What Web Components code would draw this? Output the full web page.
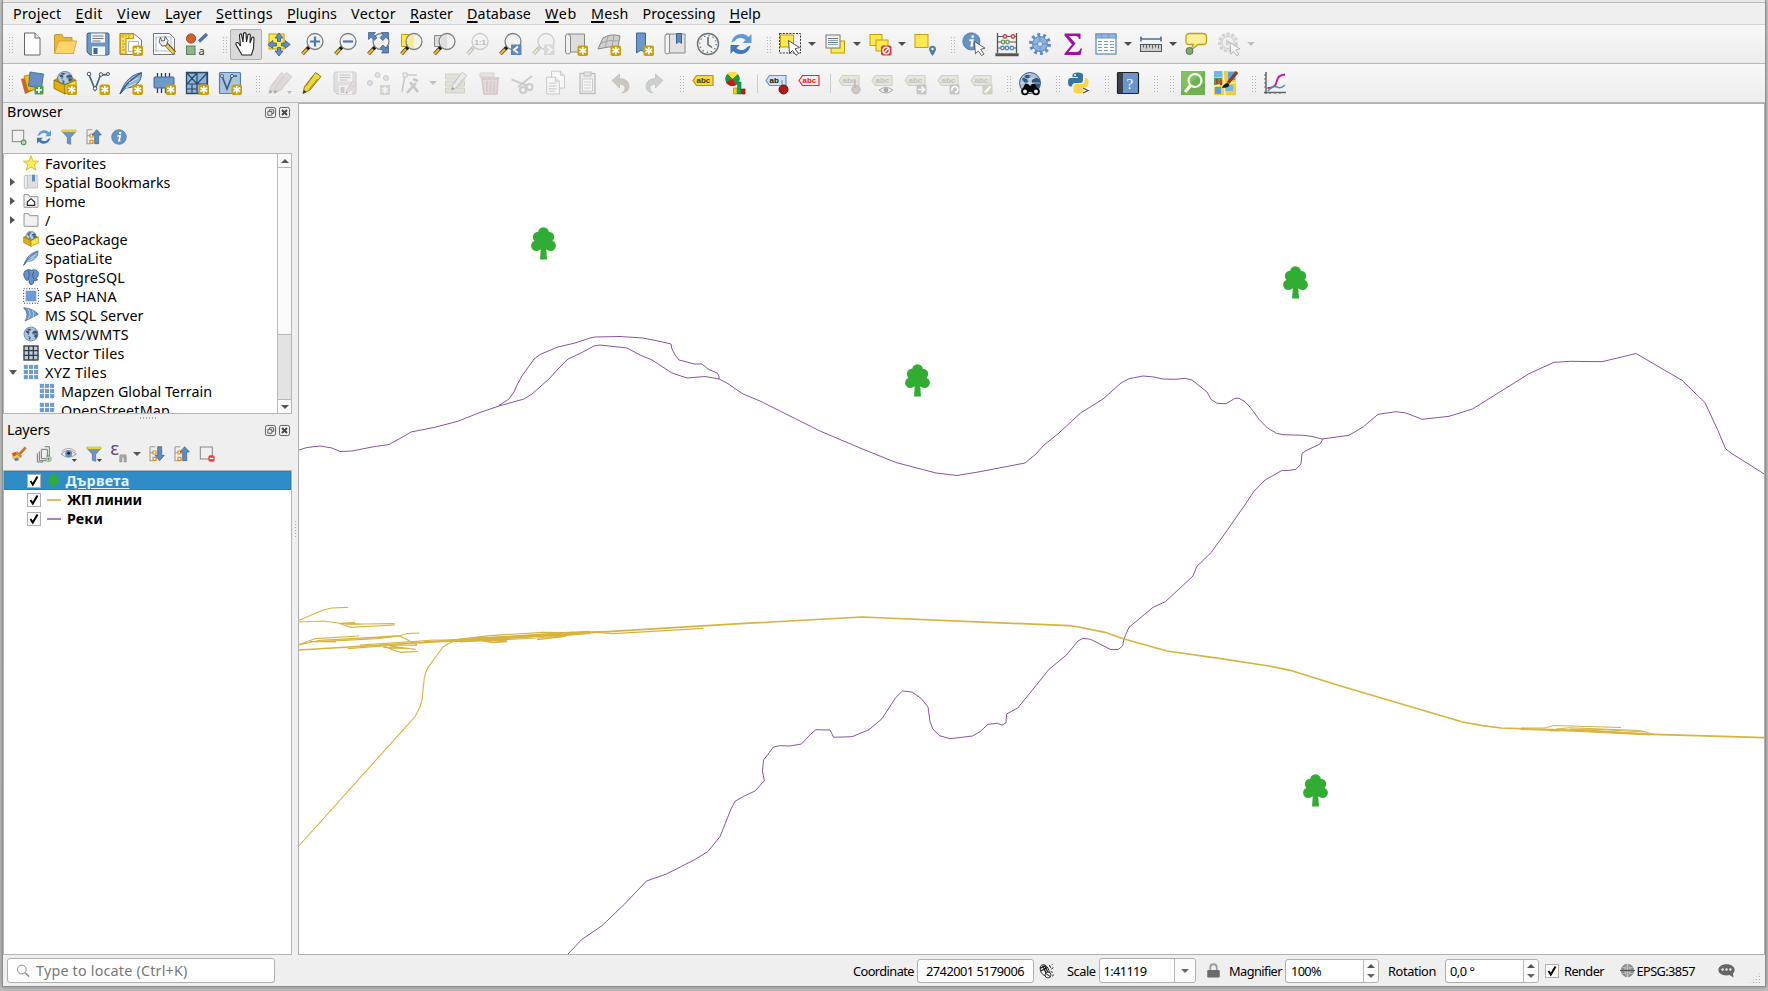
<!DOCTYPE html>
<html lang="en">
<head>
<meta charset="utf-8">
<title>QGIS</title>
<style>
html,body{margin:0;height:100%;overflow:hidden}
body{background:linear-gradient(#c9c9c9,#bdbdbd);font-family:"Noto Sans","Open Sans",sans-serif;color:#000}
</style>
</head>
<body>
<gis-window></gis-window>
<script>
/* ---------- icon drawings, on a 24 x 24 grid ---------- */
const star='<rect x="13.5" y="13.5" width="10.5" height="10.5" rx="1.8" fill="#c8a208"/><path d="M18.8 15v7.4M15.4 16.8l6.8 3.8M15.4 20.6l6.8-3.8" stroke="#fff" stroke-width="1.7"/>';
const abc=(f,s,t)=>`<path d="M2 9.500l3.500-5h16.500v10h-16.500z" fill="${f}" stroke="${s}" stroke-width="1.200"/><text x="5.500" y="12.200" font-family="Liberation Sans,sans-serif" font-weight="700" font-size="8" fill="${t}">abc</text>`;
const lens=(body='',fill='#f1f1ef')=>`<path d="M8.500 15.500L2.500 22" stroke="#55400c" stroke-width="3.600"/><path d="M7 17.200L2.500 22" stroke="#f3b72f" stroke-width="2.200"/><path d="M10 14L7.500 17" stroke="#111" stroke-width="3"/><circle cx="15" cy="9.500" r="8" fill="${fill}" stroke="#7b7f80" stroke-width="1.300"/>${body}`;
const globe='<circle cx="12" cy="12" r="10.500" fill="#a9c1da" stroke="#3f5f84"/><path d="M4 8l4-4 5 0-1 3-3 1 1 3-2 3-2-3zM14 9l4-3 4 3 0 6-3 4-2-2 0-4-3-1zM8 15l4 1-1 5-2-1z" fill="#34577f"/><path d="M2 12h20M12 2v20M5 6q7 4 14 0M5 18q7-4 14 0" stroke="#dde8f2" stroke-width=".7" fill="none"/>';
const refresh='<path d="M2.500 10.500C3.500 4.500 9 .8 15 2.200c2 .5 3.600 1.600 4.700 2.900L22.500 2v9h-9l3-3C13 4.600 7.700 5.600 6 9z" fill="#5f9bd6"/><path d="M21.500 13.500C20.500 19.500 15 23.200 9 21.800c-2-.5-3.600-1.600-4.700-2.900L1.500 22v-9h9l-3 3c3.500 3.400 8.800 2.400 10.500-1z" fill="#3f79bb"/>';
const funnel='<path d="M1.500 3.500h21l-8 9V23l-5-1.500v-9z" fill="#6c95c6" stroke="#4a6f9b"/><path d="M1.500 1.500h21v3h-21z" fill="#fbe74b" stroke="#b79b13" stroke-width=".8"/>';
const info='<circle cx="12" cy="12" r="11" fill="#6692c5" stroke="#4876aa"/><circle cx="13.700" cy="6" r="1.800" fill="#fff"/><path d="M9.500 10.500h4.300l-1.800 7h2" fill="none" stroke="#fff" stroke-width="2.400"/>';
const tiles=c=>{let s='';for(let r=0;r<3;r++)for(let k=0;k<3;k++)s+=`<rect x="${1.2+k*7.7}" y="${1.2+r*7.7}" width="6.200" height="6.200" fill="${c}"/>`;return s};
const cursor='<path d="M0 0l11 7-4.500 1.300 3.500 4.700-2.500 1.800L4 10 1 13z" fill="#fff" stroke="#444" stroke-width=".9"/>';
const box='<path d="M1 9l11 4.500V23L1 17.500z" fill="#e2ae0b" stroke="#8a6a00" stroke-width=".8"/><path d="M12 13.500L23 9v9l-11 5z" fill="#fbe53c" stroke="#8a7a00" stroke-width=".8"/><path d="M1 9l4.500-3.500L12 4l6.500 1.500L23 9l-11 4.500z" fill="#c89808"/><g transform="translate(3.500 -.500) scale(.7 .62)">'+globe+'</g><path d="M1 9l11 4.500L23 9" fill="none" stroke="#8a6a00" stroke-width=".8"/>';
const feather='<path d="M1 23C4 15 8 5 22.500 1.500 23 11 16 17 6.500 17z" fill="#8db1d9" stroke="#3c6793"/><path d="M1 23C5 15 11 9 22 2" fill="none" stroke="#2c537d" stroke-width="1.100"/><path d="M7 17L17 12M10 12l9-5" stroke="#d7e5f3" stroke-width="1"/>';
const tree='<path d="M9.800 22h5.400l.8 10.500H9z"/><circle cx="12.500" cy="5.600" r="5.400"/><circle cx="7" cy="10" r="5.200"/><circle cx="18" cy="10" r="5.200"/><circle cx="5.300" cy="18.800" r="5.200"/><circle cx="19.700" cy="18.800" r="5.200"/><path d="M6 8h13v14.500H6z"/>';
const eye='<path d="M0 12Q11 1 23 12 11 22 0 12z" fill="#e5e8ea" stroke="#777"/><circle cx="11.500" cy="11.500" r="5.300" fill="#6891bf"/><circle cx="11.500" cy="11" r="2.200" fill="#222"/><path d="M1 8Q11-1 22 8" stroke="#888" fill="none"/>';
const drop='<path d="M16 19.500h8l-4 4.500z" fill="#4c4c4c"/>';
const treeList='<path d="M1.500 1h8M1.500 1v21h6M1.500 10h6" stroke="#999" fill="none" stroke-width="1.600"/><path d="M6 7.500h4.500V12H6zM6 17h4.500v4.500H6z" fill="#fff" stroke="#f08a15" stroke-width="1.800"/>';
const floppy=(a,b,c)=>`<path d="M2 1h20l1 1v20l-1 1H4l-3-3V2z" fill="${a}" stroke="${b}"/><rect x="5" y="1.500" width="14" height="9" fill="${c}"/><path d="M6.500 4h11M6.500 6.500h11M6.500 9h8" stroke="#777" stroke-width="1"/><rect x="6" y="14.500" width="13" height="8.500" fill="${c}"/><rect x="7.500" y="16" width="4" height="6" fill="${b}"/>`;
const pencil=(a,b)=>`<path d="M3 22.500l1.500-7L15.500 1.500l5.500 4L10 19z" fill="${a}" stroke="${b}"/><path d="M13 5L5.500 15.500M17.500 8L9 18.500" stroke="${b}" stroke-width=".8"/><path d="M3 22.500l.8-3.500 2.700 1.700z" fill="#333"/>`;
const page='<path d="M4.500 1.500h11l5 5v16h-16z" fill="#fff" stroke="#777"/><path d="M15.500 1.500v5h5" fill="#ddd" stroke="#777"/>';
const tag=extra=>`<g opacity=".55">${abc('#dcdbc9','#b7b6a4','#999')}</g>${extra}`;
const I={
new:'<path d="M4.500 1h10.500l5 5v17H4.500z" fill="#fff" stroke="#666"/><path d="M15 1v5h5" fill="#eee" stroke="#666"/>',
open:'<path d="M1.500 21V4q0-1.500 1.500-1.500h6l1.500 3H19v5" fill="#e5b838" stroke="#c7982a"/><path d="M1.500 21.500l4-12.500h18l-3 12.500z" fill="#fdd467" stroke="#d8a93a"/>',
save:floppy('#6b96c8','#3f6592','#f5f5f5'),
layout:'<path d="M1 1.500h13.500l8 6.500v14.500H1z" fill="#fff" stroke="#777"/><path d="M1.500 2h13v4.500H7V22H1.500z" fill="#fde350" stroke="#c2a012" stroke-width="1.200"/><path d="M4 3v3M7 3v2M10 3v3M3 9h2M3 12h3M3 15h2M3 18h3" stroke="#8c7614" stroke-width=".7"/><path d="M9.500 9.500h10v10h-10z" fill="none" stroke="#9ebade"/>'+star,
manager:'<path d="M1.500 1.500h16l5 5v16h-21z" fill="#fff" stroke="#777"/><rect x="4" y="5" width="15" height="14" fill="none" stroke="#9ebade"/><path d="M14 12l8.500 9" stroke="#6b570e" stroke-width="4.400"/><path d="M14.500 13l7.500 8" stroke="#e7c65a" stroke-width="2.800"/><path d="M8.500 5l1 4 3-.5.5-4 3 4-1.500 5-4.500.5-3-4z" fill="#eee" stroke="#555" stroke-width=".9"/>',
style:'<circle cx="6" cy="6.500" r="4.600" fill="#d2622d" stroke="#a94818"/><path d="M14 9.500l8-7.500" stroke="#4b76a8" stroke-width="3.200"/><rect x="1.500" y="14" width="8.500" height="8.500" fill="#8fb78b" stroke="#57835a"/><text x="13.500" y="22.500" font-size="11" fill="#333" font-family="Noto Sans,sans-serif">a</text>',
pan:'<path d="M8 23L2.500 13.500q-1.500-2.500.5-3 1.500-.2 3.500 3.500L5.500 3.500q.2-2 1.800-1.500L9 10 9.500 1.500q1.200-1.700 2.500 0L12.500 10l1.500-7.500q1.500-1.200 2.300.3L16 11l2-5.500q1.500-1 2 .6l-.5 10L17.500 23z" fill="#fff" stroke="#222" stroke-width="1.100"/>',
pansel:'<rect x="2" y="2" width="15" height="15" fill="#fce94f" stroke="#c4a000"/><path d="M12 1l4 5h-2.500v3.500h-3V6H8zM12 24l4-5h-2.500v-3.500h-3V19H8zM.8 12.500l5-4V11h3.700v3H5.800v2.500zM23.200 12.500l-5-4V11h-3.700v3h3.700v2.500z" fill="#6391c5" stroke="#365b88" stroke-width=".8"/>',
zoomin:lens('<path d="M15 4.500v10M10 9.500h10" stroke="#4a79ae" stroke-width="2.200"/>'),
zoomout:lens('<path d="M10 9.500h10" stroke="#4a79ae" stroke-width="2.200"/>'),
zoomfull:lens('<path d="M2.500.5h7L7.800 2.500 11 5.700 8.200 8.500 5 5.300 2.500 7.500zM22.500.5h-7l1.700 2L14 5.700l2.800 2.800L20 5.300l2.500 2.200zM22.500 21h-7l1.700-2-3-3.200 2.800-2.800L20 16l2.500-2z" fill="#5b87b8" stroke="#34587f" stroke-width=".7"/>'),
zoomsel:'<path d="M2.500 2.500h12v12h-12z" fill="#fce94f" stroke="#c4a000"/>'+lens('<path d="M15 2.500a7 7 0 0 0-6.500 9q2 4.500 6.500 5z" fill="#f3ea9d"/>','#f4f3e6'),
zoomlayer:'<path d="M2.500 3.500h10v11h-10z" fill="#ddd" stroke="#888"/>'+lens('<path d="M15 3a6.500 6.500 0 0 0 0 13z" fill="#dedede"/>'),
zoomnative:'<g opacity=".35">'+lens('<text x="9.500" y="12.500" font-size="8" font-weight="700" font-family="Liberation Sans,sans-serif" fill="#444">1:1</text>').replace('#f3b72f','#d5d0c0').replace('#111','#999')+'</g>',
zoomlast:lens('<rect x="13" y="12.500" width="10.500" height="10.500" fill="#5a88bb"/><path d="M20 14.500l-4 3.300 4 3.300" fill="none" stroke="#fff" stroke-width="2"/>'),
zoomnext:'<g opacity=".35">'+lens('<rect x="13" y="12.500" width="10.500" height="10.500" fill="#aaa"/><path d="M16.500 14.500l4 3.300-4 3.300" fill="none" stroke="#fff" stroke-width="2"/>').replace('#f3b72f','#d5d0c0').replace('#111','#999')+'</g>',
newmap:'<path d="M3.500 2h17v18h-17z" fill="#dcdcdc" stroke="#888"/><path d="M3.500 2q3 0 3 3v15q0 2-2.500 2T1.500 20V4q0-2 2-2z" fill="#f2f2f2" stroke="#888"/>'+star,
new3d:'<path d="M6 6q8-5 17-2l-2 11q-9-1-20 2z" fill="#cfcfcf" stroke="#888"/><path d="M4 11q8-4 18-2M11 4L8 16M17 3l-2 12" stroke="#999" stroke-width=".8" fill="none"/>'+star,
bookmarknew:'<path d="M6.500 1h9v20l-4.500-3-4.500 3z" fill="#6b97c9" stroke="#416893"/>'+star,
bookmarks:'<path d="M3 2h19v19H3z" fill="#e2e2e2" stroke="#888"/><path d="M2 3.500Q4 1 6.500 2.500V20q-.5 2-2.500 2t-2-2z" fill="#f6f6f6" stroke="#888"/><path d="M13.500 1.500h5v10l-2.500-2-2.500 2z" fill="#5b8bc2" stroke="#3b6391"/>',
clock:'<circle cx="12" cy="12" r="10.500" fill="#f1f1f0" stroke="#707070" stroke-width="1.400"/><circle cx="12" cy="12" r="8.300" fill="none" stroke="#4a7fb8" stroke-width="1.300" stroke-dasharray="1.300 3.050"/><path d="M12 5v7.500l4 3" fill="none" stroke="#666" stroke-width="1.500"/>',
refresh,
select:'<rect x="1.500" y="1.500" width="21" height="19.500" fill="none" stroke="#333" stroke-dasharray="2 1.300"/><rect x="2.500" y="3" width="13" height="12" fill="#fce94f" stroke="#c4a000"/><g transform="translate(10.500 8.500)">'+cursor+'</g>',
selform:'<rect x="8" y="9" width="13.500" height="12" fill="#fce94f" stroke="#c4a000"/><rect x="3" y="3" width="14" height="13" fill="#f2f2f2" stroke="#777"/><path d="M5 6.500h10M5 10.500h10" stroke="#777"/><path d="M5 8.500h10M5 12.500h10" stroke="#7fa6d4"/>',
deselect:'<rect x="2" y="2.500" width="12" height="11" fill="#fce94f" stroke="#c4a000"/><rect x="8" y="8" width="12" height="11" fill="#fce94f" stroke="#c4a000"/><rect x="13" y="13.500" width="10.500" height="10" rx="2" fill="#d93a3a"/><circle cx="18.200" cy="18.500" r="3.200" fill="none" stroke="#fff" stroke-width="1.400"/><path d="M16 20.700l4.500-4.500" stroke="#fff" stroke-width="1.300"/>',
selloc:'<rect x="2" y="2.500" width="13" height="13" fill="#fce94f" stroke="#c4a000"/><path d="M19.500 24q-3.500-5-3.500-6.800a3.500 3.500 0 0 1 7 0Q23 19 19.500 24z" fill="#557d9c"/><circle cx="19.500" cy="17" r="1.200" fill="#fff"/>',
identify:'<g transform="scale(.78)">'+info+'</g><g transform="translate(12.500 9.500) scale(.95)">'+cursor+'</g>',
abacus:'<path d="M2.500 1v20M21.500 1v20M1 22h22v1.500H1z" stroke="#555" fill="#ccc" stroke-width="1.300"/><path d="M2 4.500h20M2 10h20M2 16h20" stroke="#555"/><g fill="#fff" stroke-width="1.500"><g stroke="#c44"><circle cx="10" cy="4.500" r="1.700"/><circle cx="18" cy="4.500" r="1.700"/></g><g stroke="#6a9f5e"><circle cx="8" cy="10" r="1.700"/><circle cx="12.500" cy="10" r="1.700"/></g><g stroke="#5889bd"><circle cx="7.500" cy="16" r="1.700"/><circle cx="12" cy="16" r="1.700"/><circle cx="17" cy="16" r="1.700"/></g></g>',
gear:'<circle cx="12" cy="12" r="9" fill="none" stroke="#5c8ccc" stroke-width="4" stroke-dasharray="2.800 2.850"/><circle cx="12" cy="12" r="7.500" fill="#8fb1e0" stroke="#5c8ccc"/><circle cx="12" cy="12" r="2.400" fill="#eee" stroke="#5c8ccc"/><path d="M12 5v4M12 15v4M5 12h4M15 12h4" stroke="#5c8ccc"/>',
sigma:'<path d="M3.500 1.500h16V7H18q-.5-3-3.500-3H8l6.500 7.500L7.500 20H15q3.500 0 4.500-3.500h1.500L19.500 23H3.500v-1.500L11 12.500 3.500 3.500z" fill="#a3109f"/>',
table:'<rect x="2" y="2" width="20" height="20" fill="#fff" stroke="#6d97c7" stroke-width="1.400"/><path d="M2 2h20v4H2z" fill="#8fb5dd" stroke="#6d97c7"/><path d="M7.500 2v4M14.500 2v4M4 9.500h4M10 9.500h4M16 9.500h4M4 12.500h4M10 12.500h4M16 12.500h4M4 15.500h4M10 15.500h4M16 15.500h4M4 18.500h4M10 18.500h4M16 18.500h4" stroke="#729cc9" stroke-width="1.200"/>',
measure:'<path d="M2 7h20M2 4.500v5M22 4.500v5" stroke="#4c6e94" stroke-width="1.600"/><rect x="1.500" y="12.500" width="21" height="7" fill="#cfcfcf" stroke="#555"/><path d="M4.500 12.500v3M7.500 12.500v4M10.500 12.500v3M13.500 12.500v4M16.500 12.500v3M19.500 12.500v4" stroke="#555" stroke-width=".9"/>',
tips:'<path d="M6 19l3.500-6.500H5q-3 0-3-3V5q0-3.500 3.500-3.500h13Q22.500 1.500 22.500 5v4q0 3.500-3.500 3.500h-5z" fill="#fbf09a" stroke="#bd9f1d" stroke-width="1.300"/><circle cx="5.500" cy="19" r="3.500" fill="#7fab73" stroke="#56794e"/>',
action:'<g opacity=".45"><circle cx="11" cy="10.500" r="8.500" fill="#ddd" stroke="#aaa" stroke-width="3" stroke-dasharray="3 1.800"/><circle cx="11" cy="10.500" r="6" fill="#eee" stroke="#999"/><path d="M9 7l5 3.500L9 14z" fill="#aaa"/><g transform="translate(13 10.500) scale(.9)">'+cursor+'</g></g>',
dsm:'<path d="M1 8l8-2 5 13-9 4z" fill="#cf632b"/><path d="M4 5l10-2 3 15-9 2z" fill="#e9c11c" stroke="#a87d00" stroke-width=".7"/><path d="M10 1l13.500 2-2 14.500L8.500 15z" fill="#6690c3" stroke="#3e6390" stroke-width=".8"/><rect x="14.500" y="14.500" width="9" height="9" rx="1.500" fill="#4e9b54"/><path d="M19 16v6M16 19h6" stroke="#fff" stroke-width="1.700"/>',
gpkg:box+star, shp:'<path d="M3 3.500l6 15 5.500-14.500 7-.5" fill="none" stroke="#4f6a86" stroke-width="1.800"/><g fill="#fff" stroke="#456"><circle cx="3" cy="3" r="1.800"/><circle cx="9" cy="17.500" r="1.800"/><circle cx="15" cy="3.500" r="1.800"/><circle cx="22" cy="3" r="1.500"/></g>'+star,
spatialite:feather+star,
memory:'<path d="M5.500 2v20M9.500 2v20M13.500 2v20M17.500 2v20" stroke="#335" stroke-width="1.300"/><rect x="2" y="6" width="20" height="11" rx="1" fill="#6c99cc" stroke="#416893"/>'+star,
mesh:'<path d="M1.500 1.500h21v21h-21z" fill="#8fb2db" stroke="#284869" stroke-width="1.300"/><path d="M12 13h10V2zM2 2l10 11V2zM2 13h20M12 2v20M2 13L12 2M7 13v9M12 18H2" fill="none" stroke="#284869" stroke-width="1.200"/>'+star,
virtual:'<rect x="1.500" y="1.500" width="21" height="21" rx="1" fill="#a9c4df" stroke="#587fa8" stroke-width="1.200"/><path d="M4 5l5 13 5-13h5" fill="none" stroke="#365a80" stroke-width="1.600"/><g fill="#fff" stroke="#365a80"><circle cx="4" cy="5" r="1.500"/><circle cx="14" cy="5" r="1.500"/></g>'+star,
edits:'<g opacity=".4"><g transform="translate(-1 0)">'+pencil('#c8b6b6','#a79a9a')+'</g><g transform="translate(4 0)">'+pencil('#c4b4b4','#a79a9a')+'</g><path d="M20 20h5l-2.500 3z" fill="#666"/></g>',
edit:pencil('#edd73c','#8b7a14'),
saveedit:'<g opacity=".42">'+floppy('#c5c5c5','#999','#f1f1f1')+'<g transform="translate(11 9) scale(.6)">'+pencil('#d5b9b9','#b08f8f')+'</g></g>',
addpt:'<g opacity=".4" fill="#c5c5c5" stroke="#909090"><circle cx="4" cy="12" r="2.500"/><circle cx="11.500" cy="4" r="2.500"/><circle cx="20" cy="7" r="2.500"/></g><g opacity=".4"><rect x="14" y="14" width="10" height="10" rx="1" fill="#a9a696"/><path d="M19 15.500v7M16 17l6 4M16 21l6-4" stroke="#fff" stroke-width="1.500"/></g>',
vertex:'<g opacity=".4" stroke="#888" fill="none"><path d="M3 21L6 4h12" stroke-width="1.500"/><rect x="4" y="2" width="4" height="4" fill="#ddd"/><path d="M8 22L17 12M11 11l8 10M14 8l5 2" stroke-width="2.600"/></g>',
attrs:'<g opacity=".45"><path d="M1.500 3h19v5h-19zM1.500 10h19v5h-19zM1.500 17h19v5h-19z" fill="#cfcdb4" stroke="#aaa890"/><g transform="translate(5 0) scale(.85)">'+pencil('#ddd','#888')+'</g></g>',
trash:'<g opacity=".42"><path d="M3 2h14v4H3z" fill="#d5c9b5" stroke="#aaa"/><path d="M5 8h16l-1 15H7z" fill="#d3b9b9" stroke="#b08f8f" stroke-width="1.600"/><path d="M3.500 7h19M10 10v11M13.500 10v11M17 10v11" stroke="#b08f8f" stroke-width="1.600"/></g>',
cut:'<g opacity=".42" fill="none" stroke="#999" stroke-width="2"><path d="M1.500 8.500L18 15M22 5L8 16"/><circle cx="19.500" cy="16" r="3"/><circle cx="13" cy="19" r="3"/></g>',
copy:'<g opacity=".42"><g transform="translate(5 -1) scale(.8)">'+page+'</g><g transform="translate(0 5) scale(.8)">'+page+'<path d="M7 9h10M7 12.500h10M7 16h10M7 19h8" stroke="#777"/></g></g>',
paste:'<g opacity=".42"><rect x="4" y="2.500" width="15" height="20" fill="#e3e3e3" stroke="#777" stroke-width="1.300"/><rect x="8" y="1" width="7" height="4" fill="#ccc" stroke="#777"/><path d="M6.500 8h10v12h-10zM8 11h7M8 14h7M8 17h7" fill="#fff" stroke="#999"/></g>',
undo:'<path d="M3 9.500L10.500 3v4.500q10 .5 9.500 8.500-.3 5-7 6 3.500-2.500 3-5.500-.4-3-5.500-3.500v4z" fill="#cdc7c2" stroke="#b9b2ad" stroke-width=".6"/>',
redo:'<path d="M21 9.500L13.500 3v4.500q-10 .5-9.500 8.500.3 5 7 6-3.500-2.500-3-5.500.4-3 5.500-3.500v4z" fill="#ccd0cc" stroke="#b7bcb7" stroke-width=".6"/>',
label:abc('#f5d93a','#b99411','#4b3a05'),
diagram:'<circle cx="8.500" cy="8" r="7" fill="#e63030"/><path d="M8.500 8L3.500 3a7 7 0 0 1 10.500.3z" fill="#fbe32b"/><path d="M8.500 8L14 3.300a7 7 0 0 1-1.500 10.400z" fill="#169a48"/><path d="M8.500 8v7a7 7 0 0 1-5-12z" fill="#169a48"/><path d="M8.500 8L2 11a7 7 0 0 0 10 3z" fill="#c91b1b"/><path d="M9.500 17h3.500v6H9.500z" fill="#f2cd16" stroke="#a58400" stroke-width=".6"/><path d="M13.500 11h3.500v12h-3.500z" fill="#17a04b" stroke="#075" stroke-width=".6"/><path d="M17.500 18H21v5h-3.500z" fill="#d51616" stroke="#700" stroke-width=".6"/>',
labelpin:abc('#cfe2f8','#5b95d8','#111').replace('>abc<','>ab<')+'<path d="M18 9v8" stroke="#eee" stroke-width="2.400"/><path d="M18 9v8" stroke="#777" stroke-width="1"/><circle cx="19.500" cy="18.500" r="4.500" fill="#a81c1c" stroke="#740f0f"/>',
labelred:abc('#fff0f0','#ff2020','#f01414'),
lpin:tag('<circle cx="19" cy="18.500" r="4.200" fill="#d0c8c8" stroke="#c1b9b9"/><path d="M18 9v8" stroke="#bbb" stroke-width="1.500"/>'),
leye:tag('<path d="M9 19q7-5 14 0-7 6-14 0z" fill="#eee" stroke="#aaa"/><circle cx="16" cy="19" r="2.300" fill="#aaa"/>'),
lmove:tag('<rect x="13.500" y="13.500" width="10" height="10" rx="1" fill="#c6c6c3"/><path d="M15 18.500h6M18.500 15.500l3 3-3 3" stroke="#fff" stroke-width="1.500" fill="none"/>'),
lrot:tag('<rect x="13.500" y="13.500" width="10" height="10" rx="1" fill="#c6c6c3"/><path d="M16 19.500a3 3 0 1 1 3 2" stroke="#fff" stroke-width="1.700" fill="none"/>'),
ledit:tag('<rect x="13.500" y="13.500" width="10" height="10" rx="1" fill="#cfcfc4"/><path d="M16 21.500l5.500-6" stroke="#fff" stroke-width="2"/>'),
metasearch:globe+'<path d="M3 21l4-8h3l2 2 2-2h3l4 8z" fill="#060606"/><circle cx="7" cy="20.500" r="3.800" fill="#060606"/><circle cx="18" cy="20.500" r="3.800" fill="#060606"/><circle cx="7" cy="20.500" r="2" fill="#ececec"/><circle cx="18" cy="20.500" r="2" fill="#ececec"/>',
python:'<path d="M11 1.500q5 0 5 2.800V9q0 3-3 3H8q-3 0-3 3.500H3.500Q1 15.500 1 11t3.500-4H11V6H5.500V4q0-2.500 5.500-2.500z" fill="#3474a9"/><circle cx="8" cy="4" r="1" fill="#fff"/><path d="M11.500 22.500q-5 0-5-2.800V16q0-3 3-3h5q3 0 3-3.500V7h1.500q2.500 0 2.500 4.500T18 16.500h-6.500v1H17v2q0 3-5.500 3z" fill="#fed443"/><path d="M16 17l5 2.500L16 22" fill="none" stroke="#fff" stroke-width="3"/><path d="M16 17l5 2.500L16 22" fill="none" stroke="#444" stroke-width="1.200"/>',
help:'<rect x="1.500" y="1.500" width="21" height="21" rx="1" fill="#6a97cb" stroke="#222" stroke-width="1.200"/><path d="M2 2h5v20H2z" fill="#39414d"/><text x="10.500" y="18" font-size="15" font-family="Liberation Serif,serif" fill="#fff">?</text>',
qms:'<rect x="0" y="0" width="24" height="24" fill="#6fb14f"/><path d="M0 0h24L0 20z" fill="#81bf60"/><circle cx="14" cy="9.500" r="6.500" fill="none" stroke="#fff" stroke-width="2.200"/><path d="M9.500 14.500L4 21" stroke="#fff" stroke-width="3.200"/>',
osm:'<rect width="22" height="24" fill="#f5cd38"/><path d="M0 0h9v6H0zM11 14h8v6h-8z" fill="#6db8e8"/><path d="M0 7h8v8H0z" fill="#4fa044"/><path d="M1 16h6v7H1zM14 1h7v8h-7z" fill="#5a9de0"/><path d="M0 15l24-4M9 0l2 24" stroke="#fff3bd" stroke-width="1.500"/><path d="M3 8v5M7 9v5" stroke="#d22c2c" stroke-width="2"/><path d="M8 17q2-5 6-5l1.500 2q-1 3-7.500 3z" fill="#181818"/><path d="M14 12L23 1" stroke="#8b3f12" stroke-width="3.200"/>',
plot:'<path d="M3 1v22M1 21.500h22" stroke="#666" stroke-width="1.500"/><path d="M1 4h2M1 8h2M1 12h2M1 16h2M7 21v2M12 21v2M17 21v2" stroke="#666"/><path d="M4.500 17q8 0 9-6 1-7 8.500-7.500" fill="none" stroke="#c31aa0" stroke-width="1.800"/><path d="M5 20q5-6 9-4t8-2" fill="none" stroke="#4f94ac" stroke-width="1.500"/>',
addlayer:'<rect x="2" y="2" width="17" height="17" fill="#f0f0f0" stroke="#888" stroke-width="1.500"/><circle cx="19" cy="20" r="3.600" fill="#b9d6b5" stroke="#4f8f52" stroke-width="1.600"/>',
funnel, funneld:funnel+drop, info,
collapse:treeList+'<path d="M16 1l7 8h-4v13h-6V9H9z" fill="#5e8cc0" stroke="#35597f"/>',
expand:treeList+'<path d="M16 22l7-8h-4V1h-6v13H9z" fill="#5e8cc0" stroke="#35597f"/>',
star:'<path d="M12 1l3 8 8.500.3-6.700 5.200 2.400 8.200L12 18l-7.200 4.700 2.400-8.200L.5 9.300 9 9z" fill="#fcee55" stroke="#d7ab15" stroke-width="1.200"/>',
bookpale:'<path d="M3 2h19v19H3z" fill="#dedede" stroke="#b5b5b5"/><path d="M2 3.500Q4 1 6.500 2.500V20q-.5 2-2.500 2t-2-2z" fill="#f2f2f2" stroke="#aaa"/><path d="M13.500 1h4.500v11l-2.200-2-2.300 2z" fill="#5b8bc2"/>',
home:'<path d="M1.500 21.500v-19h7l1.500 3h12.500v16z" fill="#f1f1f1" stroke="#888" stroke-width="1.300"/><path d="M6.500 13.500L12 8.500l5.500 5v5h-11z" fill="#fff" stroke="#222" stroke-width="1.700"/>',
folder:'<path d="M1.500 21.500v-19h7l1.500 3h12.500v16z" fill="#f1f1f1" stroke="#888" stroke-width="1.300"/>',
box,feather,globe,
postgres:'<path d="M3 3Q8-1 12 2q8-3 11 3 1 7-4 10l3 1-4 2-2-1q1 6-4 6.500-3 0-3-6l-1-2-2 2Q.5 13 1 7z" fill="#6593c7" stroke="#2f5481" stroke-width="1.200"/><path d="M8 3q3 4 0 12M16 4q-3 5 0 11" stroke="#254a75" fill="none"/>',
hana:'<rect x="4" y="4" width="16" height="16" fill="#6e9bd0"/><rect x="1" y="1" width="22" height="22" fill="none" stroke="#223c5e" stroke-width="1.600" stroke-dasharray="1.500 2.500"/>',
mssql:'<path d="M1 1q14 1 22 10L3 21q7-10-2-20z" fill="#6a97ca" stroke="#3a6491"/><path d="M8 3q5 8 0 15M14 5q4 6 1 10" stroke="#d3e2f1" fill="none" stroke-width="1.200"/>',
vtiles:'<rect x="1.500" y="1.500" width="21" height="21" fill="#bccada" stroke="#343d47" stroke-width="2"/><path d="M8.500 1v22M15.500 1v22M1 8.500h22M1 15.500h22" stroke="#343d47" stroke-width="2"/>',
xyz:tiles('#6f9ccf'),
brush:'<path d="M2 12l7-4 6 6-4 8-9-3z" fill="#f2cf52"/><path d="M1 11l6-2 3 3-6 4z" fill="#e24e36"/><path d="M4 19l6-2 2 4-5 2z" fill="#5a86c4"/><path d="M9 8l8 7-3 3-7-7z" fill="#c98b46"/><path d="M13 12L22 2" stroke="#c2762f" stroke-width="4"/>',
group:'<path d="M8 5h9v14H8zM5 8v14h10M2 11v13h9" fill="#eee" stroke="#777" stroke-width="1.500"/><path d="M13 1h7v14h-4" fill="none" stroke="#777" stroke-width="1.500"/><circle cx="19" cy="19.500" r="4" fill="#dcefd8" stroke="#579a5a"/><path d="M19 17v5M16.500 19.500h5" stroke="#579a5a" stroke-width="1.500"/>',
eye:eye+drop,
epsilon:'<text x="-1" y="14" font-size="28" fill="#6b4778" font-family="Noto Sans,sans-serif">ε</text><path d="M13 24v-9q0-2 2-2h6q2 0 2 2v9h-3.500v-7h-3v7z" fill="#a8a8a8" stroke="#888" stroke-width=".7"/>',
remove:'<rect x="2" y="1.500" width="18" height="18" fill="#f0f0f0" stroke="#888" stroke-width="1.500"/><rect x="14" y="14" width="9.500" height="9.500" rx="3" fill="#e5433e"/><path d="M16 18.700h5.500" stroke="#fff" stroke-width="1.800"/>',
float:'<rect x="1" y="1" width="22" height="22" rx="4" fill="none" stroke="#555" stroke-width="2"/><path d="M10 10V6h9v8h-4M6 10h9v8H6z" fill="none" stroke="#555" stroke-width="2"/>',
close:'<rect x="1" y="1" width="22" height="22" rx="4" fill="none" stroke="#555" stroke-width="2"/><path d="M6.500 6.500l11 11M17.500 6.500l-11 11" stroke="#444" stroke-width="4"/>',
mag:'<circle cx="10" cy="9.500" r="7.500" fill="none" stroke="#888" stroke-width="1.700"/><path d="M15.500 15l7 6.500" stroke="#888" stroke-width="2.400"/>',
mouse:'<g fill="none" stroke="#222" stroke-width="1.300"><ellipse cx="10" cy="11" rx="6" ry="9" transform="rotate(-28 10 11)" fill="#fff"/><path d="M3 8l8-4M4 12l10-5M10 3l6 14M7 4l5 11" stroke-width="2"/><circle cx="15" cy="18" r="4.500" fill="#eee"/><path d="M12 16l6 4M17 3l2 4M20 9l3-2M19 13l3 1M21 2l1 1M22 20l1-3" stroke-width="1.500"/></g>',
lock:'<path d="M7 12V7q0-5 5-5t5 5v5" fill="none" stroke="#999" stroke-width="3"/><path d="M9 12V7.500q0-3 3-3t3 3V12" fill="none" stroke="#eee" stroke-width="1"/><rect x="2" y="11" width="20" height="12" rx="2" fill="#6b6b6b"/>',
crs:'<circle cx="12" cy="12" r="10" fill="#8a8a8a" stroke="#6e6e6e"/><path d="M12 2v20M4 7q8 3 16 0M4 17q8-3 16 0M12 2q-9 10 0 20M12 2q9 10 0 20" stroke="#e2e2e2" fill="none" stroke-width=".9"/><path d="M0 12h24" stroke="#555" stroke-width="1.600"/>',
bubble:'<path d="M12 3c7 0 11.500 3.500 11.500 8 0 2.500-1 4-2.500 5.500l1 5.500-6-3.500q-2 .5-4 .5C5 19 .5 15.500.5 11S5 3 12 3z" fill="#666"/><circle cx="6.500" cy="10.500" r="1.700" fill="#eee"/><circle cx="12" cy="10.500" r="1.700" fill="#eee"/><circle cx="17.500" cy="10.500" r="1.700" fill="#eee"/>'
};
const define=(name,css,html,setup)=>customElements.define(name,class extends HTMLElement{
  connectedCallback(){
    if(this.shadowRoot)return;
    const root=this.attachShadow({mode:'open'});
    root.innerHTML=`<style>*{box-sizing:border-box}${css}</style>${typeof html==='function'?html(this):html}`;
    if(setup)setup(this,root);
  }
});
const at=(e,n,d='')=>e.getAttribute(n)??d;

define('gis-icon',':host{display:block;flex:none}svg{display:block;overflow:visible}',
  e=>`<svg width="${at(e,'size',24)}" height="${at(e,'size',24)}" viewBox="0 0 24 24" fill="none">${I[at(e,'name')]||''}</svg>`);

/* Label whose tracking is tuned so that it occupies a given width. */
const pen=document.createElement('canvas').getContext('2d');
define('fit-text',':host{display:block;flex:none;white-space:pre}u{text-decoration-thickness:1.500px;text-underline-offset:2px;text-decoration-skip-ink:none}',
  e=>{const t=at(e,'text'),k=e.hasAttribute('key')?+at(e,'key'):-1;
    return k<0?`<span>${t}</span>`:`<span>${t.slice(0,k)}<u>${t[k]}</u>${t.slice(k+1)}</span>`},
  e=>{const c=getComputedStyle(e),w=+at(e,'w'),t=at(e,'text');
    pen.font=`${c.fontWeight} ${c.fontSize} ${c.fontFamily}`;
    e.style.width=w+'px';
    e.style.letterSpacing=((w-pen.measureText(t).width)/t.length).toFixed(3)+'px';});

define('menu-bar',':host{display:flex;gap:14px;height:22px;padding-left:10px;align-items:center;background:#efefef;border-bottom:1px solid #d3d3d3;font-size:14.300px;line-height:20px}',
  ()=>[['Project',48.5,3],['Edit',27.5,0],['View',34,0],['Layer',37,0],['Settings',57,0],['Plugins',50,0],['Vector',45,4],['Raster',43,0],['Database',64,0],['Web',32,0],['Mesh',37.5,0],['Processing',73,3],['Help',31.5,0]]
    .map(([t,w,k])=>`<fit-text text="${t}" w="${w}" key="${k}"></fit-text>`).join(''));

define('tool-bar',`:host{display:flex;height:39px;padding-left:1.500px;align-items:center;background:linear-gradient(#f8f8f8,#ededed);border-bottom:1px solid #b9b9b9}
 .t{width:33px;height:32px;display:grid;place-items:center;flex:none}
 .on{width:31.500px;margin:0 .75px;height:31px;background:#dadada;border:1px solid #adadad;border-radius:2px}
 .g{width:16px;flex:none;padding-left:8px}.g:first-of-type{width:11px;padding-left:3px}
 .g i{display:block;width:5px;height:17px;background-image:radial-gradient(circle,#b3b3b3 .7px,transparent .9px);background-size:3px 3px}
 .d{width:12px;flex:none}.d:before{content:"";display:block;width:0;margin-left:1.500px;border:4px solid transparent;border-top-color:#4d4d4d;border-bottom:0}.d.off{opacity:.3}
 .s{width:7px;flex:none;height:19px;background:linear-gradient(#ccc,#ccc) 4px 0/1px 100% no-repeat}`,
 e=>at(e,'items').split(' ').map(n=>n==='|'?'<span class="g"><i></i></span>':n==='v'?'<span class="d"></span>':n==='v-'?'<span class="d off"></span>':n==='/'?'<span class="s"></span>':
   `<span class="t ${n==='pan'?'on':''}"><gis-icon name="${n}"></gis-icon></span>`).join(''));

define('dock-title',':host{display:flex;align-items:center;height:20px;padding:0 2px 2px 4px;font-size:14.300px;line-height:18px}span{flex:1}gis-icon{margin-left:3px;margin-top:1px}',
 e=>`<fit-text text="${at(e,'text')}" w="${at(e,'w')}"></fit-text><span></span><gis-icon name="float" size="11"></gis-icon><gis-icon name="close" size="11"></gis-icon>`);

define('dock-tools',':host{display:flex;align-items:center;gap:9.100px;padding:0 0 2px 7.500px}b{width:0;height:0;border:4px solid transparent;border-top-color:#555;border-bottom:0;margin:0 -1.500px 0 -3px}',
 e=>at(e,'items').split(' ').map(n=>n==='v'?'<b></b>':`<gis-icon name="${n}" size="16"></gis-icon>`).join(''));

define('tree-row',`:host{display:flex;align-items:center;height:19px;flex:none;font-size:14.300px;line-height:19px}
 .a{width:19px;flex:none;display:flex;padding-left:6px}.r{border:4px solid transparent;border-left:5px solid #555;border-right:0}.o{margin-left:-1.500px;border:4px solid transparent;border-top:5px solid #555;border-bottom:0}
 gis-icon{margin-right:6px}`,
 e=>`<span class="a" style="margin-right:${at(e,'level',0)*16}px">${at(e,'arrow')?`<i class="${at(e,'arrow')}"></i>`:''}</span><gis-icon name="${at(e,'icon')}" size="16"></gis-icon><fit-text text="${at(e,'text')}" w="${at(e,'w')}"></fit-text>`);

define('scroll-bar',`:host{display:flex;flex-direction:column;width:14px;border-left:1px solid #b8b8b8;background:#e3e3e3}
 .b{height:14px;display:grid;place-items:center;background:#fbfbfb}.up{border-bottom:1px solid #b8b8b8}.dn{border-top:1px solid #b8b8b8;margin-top:auto}
 .h{height:167px;background:#fafafa;border-bottom:1px solid #b8b8b8}
 i{border:4px solid transparent}.up i{border-bottom-color:#555;border-top:0}.dn i{border-top-color:#555;border-bottom:0}`,
 '<span class="b up"><i></i></span><span class="h"></span><span class="b dn"><i></i></span>');

define('browser-tree',':host{display:flex;border:1px solid #b5b5b5;background:#fff;overflow:hidden}.rows{flex:1;min-height:0;display:flex;flex-direction:column;margin-top:-.5px}',
 ()=>'<div class="rows">'+[['star','','Favorites',61],['bookpale','r','Spatial Bookmarks',125.5],['home','r','Home',40.5],['folder','r','/',6],['box','','GeoPackage',82.5],['feather','','SpatiaLite',67.5],['postgres','','PostgreSQL',80],['hana','','SAP HANA',72],['mssql','','MS SQL Server',98.5],['globe','','WMS/WMTS',84],['vtiles','','Vector Tiles',79.5],['xyz','o','XYZ Tiles',62],['xyz','','Mapzen Global Terrain',151,1],['xyz','','OpenStreetMap',109,1]]
  .map(([i,a,t,w,l=0])=>`<tree-row icon="${i}" arrow="${a}" text="${t}" w="${w}" level="${l}"></tree-row>`).join('')+'</div><scroll-bar></scroll-bar>');

define('check-box',':host{display:block;flex:none;width:14px;height:14px;border:1px solid #b0b0b0;background:#fff}svg{display:block}',
 '<svg width="12" height="12" viewBox="0 0 12 12"><path d="M2.500 6l2.300 3.500L9.500 1.500" fill="none" stroke="#000" stroke-width="2"/></svg>');

define('layer-row',`:host{display:flex;align-items:center;height:19px;padding-left:23px;font-weight:700;font-size:14.300px;line-height:18px;flex:none}
 :host([selected]){background:#308cc6;color:#e4f3ff;text-decoration:underline;text-underline-offset:2px;box-shadow:inset 0 0 0 1px #2a7fb5}
 .k{width:25px;display:grid;place-items:center}.l{width:14px;height:2px}`,
 e=>`<check-box></check-box><span class="k">${at(e,'color')?`<i class="l" style="background:${at(e,'color')}"></i>`:`<svg width="11" height="14" viewBox="0 0 25 33" fill="#31ad33">${tree}</svg>`}</span><fit-text style="margin-left:${at(e,'gap',1)}px" text="${at(e,'text')}" w="${at(e,'w')}"></fit-text>`);

define('layer-list',':host{display:block;border:1px solid #b5b5b5;background:#fff}',
 `<layer-row selected text="Дървета" w="64" gap="-.5"></layer-row><layer-row color="#dcc05d" text="ЖП линии" w="75"></layer-row><layer-row color="#b07fbb" text="Реки" w="36"></layer-row>`);

define('side-dock',`:host{display:grid;grid-template-columns:289px 1fr;width:295px;background:#efefef}
 .c{display:flex;flex-direction:column;min-height:0}browser-tree{height:261px}layer-list{flex:1}
 dock-tools{height:30px}.h{height:7px;display:grid;place-items:center}.h i{width:17px;height:2px;background:radial-gradient(circle,#aaa .7px,transparent .9px) 0 0/3px 2px}
 .v{display:grid;place-items:center}.v i{width:3px;height:18px;background:radial-gradient(circle,#aaa .7px,transparent .9px) 0 0/3px 3px}`,
 `<div class="c"><dock-title text="Browser" w="56"></dock-title><dock-tools items="addlayer refresh funnel collapse info"></dock-tools><browser-tree></browser-tree>
 <span class="h"><i></i></span><dock-title text="Layers" w="43"></dock-title><dock-tools style="height:29px;padding-bottom:4px" items="brush group eye funneld epsilon v expand collapse remove"></dock-tools><layer-list></layer-list></div><span class="v"><i></i></span>`);

/* ---------- the map: rivers, railways, trees ---------- */
define('map-canvas',':host{display:block;flex:1;border:1px solid #b0b0b0;background:#fff;overflow:hidden}svg{display:block}',
 `<svg width="1465" height="850" viewBox="299 104 1465 850" fill="none" stroke-linejoin="round">
 <g stroke="#8a559b" stroke-width="1">
 <polyline points="299,450 307,447.500 320,446 332,448 340,451.500 352,451 372,447 389,444.500 400,438.500 411,432 434,427.500 457,421.500 480,412.500 499,406 524,399 532,394 549,379 557,370 568,359 581,353 594,346 600,345 627,348 640,355 652,360 672,373 687,378 705,376.500 719,379 727,383 743,394 760,401 820,431 860,448 896,462.500 936,473 957,475.500 980,471.700 1025,463 1036,454 1044,445 1059,433 1080.500,413 1103,399 1121,383 1129,378.700 1143,376 1154,377 1163,379 1176,379.300 1185,378.300 1192,380 1207,392 1211,399.300 1217,403.300 1226,403.700 1235,398.300 1239,398.300 1245,401.700 1251,408.300 1259,419.300 1267.500,428 1276.500,433.300 1283,434.700 1304,435.300 1313,436.700 1322,439 1349,435.300 1363.500,426.700 1378,414.300 1396,411.700 1406,413 1422,419.300 1449,416.300 1472.500,409 1529,373.700 1554,362.300 1570.500,361.300 1602,361.700 1636,353.500 1682,380.300 1705,402.700 1718,430.700 1725.500,448.700 1731,453 1765,474.500"/>
 <polyline points="499,405.500 509,399 514,392 517,385 522,376 527,369 534,359 541,354 558,347 575,343 590,338 595,337 620,336.500 643,338 658,341 671,344 672,349 675,355 679,360 687,362 694,364 702,364 708,369 717,373 719,376 719,379"/>
 <polyline points="1323,439 1320,444 1306,450.700 1302,453.300 1301,464 1295.600,469.300 1290,470.300 1281.500,470.700 1265,480 1254,491.300 1246,503.300 1226,532 1211,552.700 1196.600,566.700 1193,576 1165.400,601.700 1153,607.300 1129,627.300 1125.700,634.700 1124,639 1122.700,645.700 1118.700,649.300 1111,649.700 1090.600,639.300 1083,638.300 1078,641 1066.400,655 1049,669.300 1033,689.300 1017.700,708 1006.600,714 1006,722.700 1002,725.300 997.600,723.300 988,724.300 980,731.700 972.500,736 950,738.700 939.600,735.700 933,729.300 930,721.700 928,707 921,698.300 912,692 902.500,691 895.600,697.700 882,718.700 869,729.700 852,736.700 833.600,737.300 830,730 816,729.700 811,733.700 801.500,744 790,746 779.600,745.700 773.500,747 763.600,760 762.400,770.700 764.300,780.700 755,791 743.700,796.300 735,801.300 731,809 720,836.700 707.700,851.700 694,860 666.400,874 646.500,881 624.300,904.300 602,925.700 582,939.300 567,955"/>
 </g>
 <g stroke="#d7b33f">
 <polyline stroke-width="1.700" points="299,650 740,623.700 862,617 1069,625.700 1078.500,627 1105,632.300 1124,639 1167,651 1219,658.300 1269,666 1290,670.300 1344,687 1462.500,722 1482.600,725.700 1501,728 1583,730.700 1653.500,734.300 1765,737.700"/>
 <polyline stroke-width="1.100" points="453,641.700 448,644 443,647 440,651 428,667.300 426,671.700 424.300,678 422,700 420,706.700 415,716.700 299,845.700"/>
 <g stroke-width="3.300" transform="translate(290 590) scale(.33333)">
 <path d="M27 91L100 60 125 54 174 52M27 96L100 93 145 99 220 102 314 101M145 99L180 112 314 105M150 100L195 98M160 105l60-3"/>
 <path d="M27 164L75 146 207 138M27 165L90 151 250 142 328 137 350 131 388 129M328 137L365 156 381 165M60 154l78 2M75 156L260 146 330 138"/>
 <path d="M210 165L380 154 430 150 490 150 570 142M173 176L280 168 330 165 380 166M285 170L315 182 330 187 383 184M280 172L360 176M300 168L377 178"/>
 <path d="M450 155L510 147 600 137 760 127 820 128 900 124M480 156L580 149 700 142 820 134 940 124M570 152L610 158 651 155M600 153L650 152M741 149L820 140 830 137M560 144L650 140 790 132 850 126M900 126L970 131 1240 115M510 156L740 144 900 130"/>
 <path stroke-width="4.500" d="M400 156L600 143 770 132 940 125"/>
 </g>
 <g stroke-width="1"><path d="M1521 728L1545 728 1554 725.500 1621 727.500M1556 729L1570 727.800 1640 730.500 1653 734M1550 731L1600 729.500 1645 732M1570 729L1645 734M1521 729.500L1570 731 1650 735"/></g>
 </g>
 <g fill="#31ad33"><g transform="translate(531 227)">${tree}</g><g transform="translate(905 364)">${tree}</g><g transform="translate(1283 266)">${tree}</g><g transform="translate(1303 774)">${tree}</g></g>
 </svg>`);

define('field-box',`:host{display:flex;align-items:center;flex:none;height:24px;border:1px solid #b0b0b0;border-radius:3px;background:#fff}
 .e{align-self:stretch;margin-left:auto;border-left:1px solid #b8b8b8;display:flex;flex-direction:column;align-items:center;justify-content:center;gap:6px;background:#fbfbfb;border-radius:0 3px 3px 0}
 .spin{width:15px}.combo{width:21px}i{border:4px solid transparent}.u{border-bottom-color:#555;border-top:0}.n{border-top-color:#666;border-bottom:0}`,
 e=>`<slot></slot>${at(e,'kind')==='spin'?'<span class="e spin"><i class="u"></i><i class="n"></i></span>':at(e,'kind')==='combo'?'<span class="e combo"><i class="n"></i></span>':''}`);

define('status-bar',`:host{display:flex;align-items:center;height:31px;background:#efefef;font-size:12.800px;line-height:20px;padding-left:4px}
 fit-text,gis-icon,check-box,field-box{flex:none}.loc{font-size:14.300px;color:#777}
 .grip{width:12px;height:12px;align-self:flex-end;margin:0 0 2px 14px;background:radial-gradient(circle,#aaa .7px,transparent .9px) 0 0/3px 3px;clip-path:polygon(100% 0,100% 100%,0 100%)}`,
 `<field-box style="width:268px;height:25px"><gis-icon name="mag" size="14" style="margin-left:8px"></gis-icon><fit-text class="loc" style="margin-left:6px" text="Type to locate (Ctrl+K)" w="151.500"></fit-text></field-box>
 <fit-text style="margin-left:578px" text="Coordinate" w="61"></fit-text>
 <field-box style="width:117px;margin-left:3px"><fit-text style="margin-left:8px" text="2742001 5179006" w="98"></fit-text></field-box>
 <gis-icon name="mouse" size="16" style="margin-left:3.500px"></gis-icon>
 <fit-text style="margin-left:13.500px" text="Scale" w="28.500"></fit-text>
 <field-box kind="combo" style="width:97px;height:25px;margin-left:3px"><fit-text style="margin-left:4px" text="1:41119" w="43"></fit-text></field-box>
 <gis-icon name="lock" size="15" style="margin-left:10px"></gis-icon>
 <fit-text style="margin-left:8.500px" text="Magnifier" w="53"></fit-text>
 <field-box kind="spin" style="width:94px;margin-left:3px"><fit-text style="margin-left:5px" text="100%" w="30"></fit-text></field-box>
 <fit-text style="margin-left:9px" text="Rotation" w="48"></fit-text>
 <field-box kind="spin" style="width:94px;margin-left:9px"><fit-text style="margin-left:4px" text="0,0 °" w="24.500"></fit-text></field-box>
 <check-box style="margin-left:6px"></check-box>
 <fit-text style="margin-left:5px" text="Render" w="40"></fit-text>
 <gis-icon name="crs" size="15" style="margin-left:15.500px"></gis-icon>
 <fit-text style="margin-left:2px" text="EPSG:3857" w="58.500"></fit-text>
 <gis-icon name="bubble" size="17" style="margin-left:23px"></gis-icon><span class="grip"></span>`);

define('gis-window',`:host{display:flex;flex-direction:column;width:1764px;height:987px;margin-left:2px;border:1px solid #8e8e8e;border-top:0;background:#efefef;box-sizing:border-box;box-shadow:0 0 5px rgba(0,0,0,.3)}
 .top{height:3px;flex:none;background:#e9e9e9;border-bottom:1px solid #bdbdbd}.main{display:flex;height:852px}
 menu-bar,tool-bar,status-bar{flex:none}`,
 `<div class="top"></div><menu-bar></menu-bar>
 <tool-bar items="| new open save layout manager style | pan pansel zoomin zoomout zoomfull zoomsel zoomlayer zoomnative zoomlast zoomnext newmap new3d bookmarknew bookmarks clock refresh | select v selform v deselect v selloc | identify abacus gear sigma table v measure v tips action v-"></tool-bar>
 <tool-bar items="| dsm gpkg shp spatialite memory mesh virtual | edits edit saveedit addpt vertex v- attrs trash cut copy paste undo redo | label diagram / labelpin labelred / lpin leye lmove lrot ledit | metasearch | python | help | | qms osm | plot"></tool-bar>
 <div class="main"><side-dock></side-dock><map-canvas></map-canvas></div><status-bar></status-bar>`);
</script>
</body>
</html>
